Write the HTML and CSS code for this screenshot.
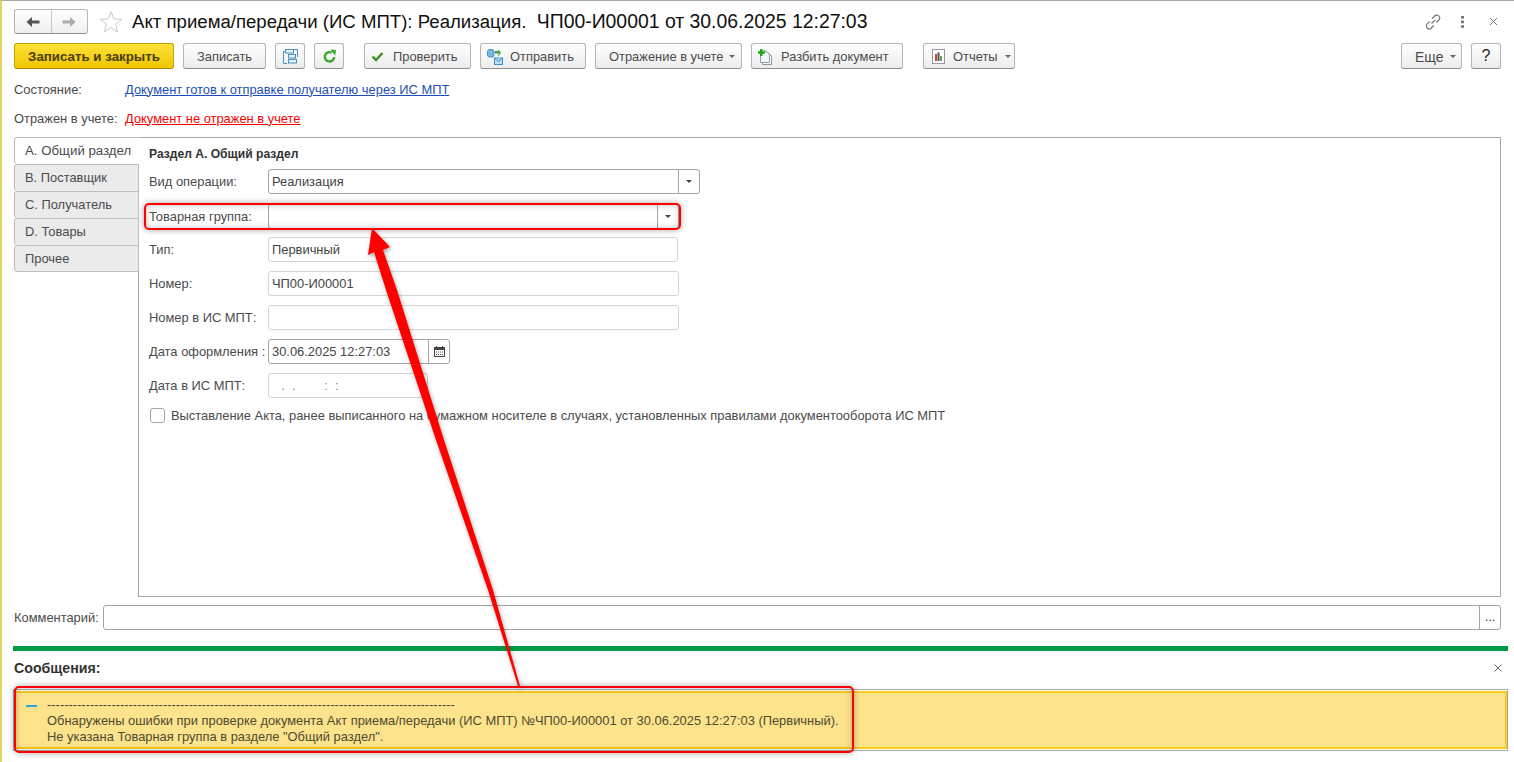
FILE: index.html
```html
<!DOCTYPE html>
<html lang="ru">
<head>
<meta charset="utf-8">
<title>Акт приема/передачи</title>
<link rel="stylesheet" href="styles.css">
</head>
<body>
<div class="page">
  <header class="titlebar">
    <div class="nav">
      <span class="nav-btn"><svg width="14" height="12" viewBox="0 0 14 12"><path d="M0.5 6 L6 1 V4.5 H13.5 V7.5 H6 V11 Z" fill="#555"/></svg></span>
      <span class="nav-btn"><svg width="14" height="12" viewBox="0 0 14 12"><path d="M13.5 6 L8 1 V4.5 H0.5 V7.5 H8 V11 Z" fill="#aaa"/></svg></span>
    </div>
    <svg class="star" width="24" height="24" viewBox="0 0 24 24"><path d="M12 1.5 L14.8 9 L22.8 9.3 L16.5 14.2 L18.7 22 L12 17.5 L5.3 22 L7.5 14.2 L1.2 9.3 L9.2 9 Z" fill="#fff" stroke="#c9c9c9"/></svg>
    <h1 class="title">Акт приема/передачи (ИС МПТ): Реализация.  <span class="title-no">ЧП00-И00001 от 30.06.2025 12:27:03</span></h1>
    <div class="win-tools">
      <svg class="wt-link" width="16" height="16" viewBox="0 0 16 16" fill="none" stroke="#777" stroke-width="1.2"><path d="M6.5 9.5 L10 6 M7 4.5 L9.5 2 a2.8 2.8 0 0 1 4.3 4 L11.3 8.5 M8.8 11.5 L6.3 14 a2.8 2.8 0 0 1 -4.1 -4.1 L4.7 7.5"/></svg>
      <svg class="wt-dots" width="3" height="12" viewBox="0 0 3 12" fill="#777"><rect x="0" y="0" width="3" height="2.6"/><rect x="0" y="4.6" width="3" height="2.6"/><rect x="0" y="9.2" width="3" height="2.6"/></svg>
      <svg class="wt-close" width="7" height="7" viewBox="0 0 7 7" stroke="#777" stroke-width="1"><path d="M0 0 L7 7 M7 0 L0 7"/></svg>
    </div>
  </header>

  <div class="toolbar">
    <button class="btn primary w-save-close">Записать и закрыть</button>
    <button class="btn w-save">Записать</button>
    <button class="btn icon"><svg width="15" height="15" viewBox="0 0 15 15" fill="none" stroke="#4a8fbd"><path d="M2 2.5 H0.5 V14.5 H4"/><path d="M11 0.5 H14.5 V8"/><rect x="2.5" y="0.5" width="8" height="3.5" fill="#eaf3f9"/><rect x="5.5" y="5.5" width="7" height="3.5" fill="#eaf3f9"/><rect x="5.5" y="10.5" width="8" height="3.5" fill="#eaf3f9"/></svg></button>
    <button class="btn icon"><svg width="15" height="15" viewBox="0 0 16 16" fill="none"><path d="M13 8.5 A5 5 0 1 1 10.5 4" stroke="#3fa535" stroke-width="2.6"/><path d="M9 0.5 L15 1 L14 7.2 Z" fill="#3fa535"/></svg></button>
    <button class="btn pad gap-l w-check"><svg width="13" height="11" viewBox="0 0 13 11" fill="none"><path d="M1.5 5.5 L5 9 L11.5 2" stroke="#3d8f22" stroke-width="2.4"/></svg>Проверить</button>
    <button class="btn pad w-send"><svg width="16" height="16" viewBox="0 0 16 16"><rect x="0.5" y="0.5" width="6.5" height="7.5" rx="2" fill="#7cb7e6" stroke="#4c8fc4"/><path d="M8 2 H11 V0.5 L14 3.5 L12 6.5 H10.5 L12 4.5 H8 Z" fill="#3fa535"/><rect x="7.5" y="9" width="8" height="6.5" fill="#bcdcf5" stroke="#3f8fd0"/><path d="M7.5 9 L11.5 12.5 L15.5 9" fill="none" stroke="#3f8fd0"/></svg>Отправить</button>
    <button class="btn pad-wide w-post">Отражение в учете<span class="caret"></span></button>
    <button class="btn pad w-split"><svg width="14" height="16" viewBox="0 0 14 16"><path d="M4.5 3.5 H10 L13.5 7 V15.5 H4.5 Z" fill="#fff" stroke="#8b9aa3"/><path d="M2.5 2 H8 L11.5 5.5 V13.5 H2.5 Z" fill="#f4f7f8" stroke="#8b9aa3"/><path d="M2 0 H4.5 V2.2 H7 V4.7 H4.5 V7 H2 V4.7 H0 V2.2 H2 Z" fill="#22a81d"/></svg>Разбить документ</button>
    <button class="btn pad-mid gap-m w-rep"><svg width="13" height="15" viewBox="0 0 13 15"><rect x="0.5" y="0.5" width="12" height="14" fill="#fff" stroke="#999"/><rect x="3" y="5" width="2" height="7" fill="#d8403a"/><rect x="5.5" y="3.5" width="2" height="8.5" fill="#555"/><rect x="8" y="7" width="2" height="5" fill="#58a94a"/></svg>Отчеты<span class="caret"></span></button>
    <span class="spacer"></span>
    <button class="btn pad-wide w-more">Еще<span class="caret"></span></button>
    <button class="btn icon help">?</button>
  </div>

  <div class="status-row status-first"><span class="status-label">Состояние:</span><a class="lnk blue">Документ готов к отправке получателю через ИС МПТ</a></div>
  <div class="status-row status-second"><span class="status-label">Отражен в учете:</span><a class="lnk red">Документ не отражен в учете</a></div>

  <section class="workspace">
    <nav class="tabs">
      <div class="tab active">А. Общий раздел</div>
      <div class="tab">В. Поставщик</div>
      <div class="tab">С. Получатель</div>
      <div class="tab">D. Товары</div>
      <div class="tab">Прочее</div>
    </nav>
    <div class="panel">
      <h2 class="panel-title">Раздел А. Общий раздел</h2>
      <div class="form">
        <div class="row r-1"><label>Вид операции:</label><div class="field dark w-432"><span class="val">Реализация</span><span class="fbtn"><span class="caret dk"></span></span></div></div>
        <div class="row r-2"><label>Товарная группа:</label><div class="field dark w-411"><span class="val"></span><span class="fbtn"><span class="caret dk"></span></span></div></div>
        <div class="row r-4"><label>Тип:</label><div class="field w-410"><span class="val">Первичный</span></div></div>
        <div class="row r-3"><label>Номер:</label><div class="field w-411"><span class="val">ЧП00-И00001</span></div></div>
        <div class="row r-3"><label>Номер в ИС МПТ:</label><div class="field w-411"><span class="val"></span></div></div>
        <div class="row r-3"><label>Дата оформления :</label><div class="field dark w-182"><span class="val">30.06.2025 12:27:03</span><span class="fbtn cal"><svg width="11" height="11" viewBox="0 0 11 11"><rect x="0.5" y="1.5" width="10" height="9" fill="#fff" stroke="#444"/><rect x="0.5" y="1.5" width="10" height="2.5" fill="#444"/><path d="M2.5 0 V2 M8.5 0 V2" stroke="#444"/><path d="M2 6 H9 M2 8.5 H9" stroke="#444" stroke-dasharray="1 1"/></svg></span></div></div>
        <div class="row r-3"><label>Дата в ИС МПТ:</label><div class="field w-160"><span class="val mask">  .  .        :  :</span></div></div>
      </div>
      <div class="check-row"><span class="checkbox"></span><span>Выставление Акта, ранее выписанного на бумажном носителе в случаях, установленных правилами документооборота ИС МПТ</span></div>
    </div>
  </section>

  <div class="comment-row"><label>Комментарий:</label><div class="field dark grow"><span class="val"></span><span class="fbtn dots">...</span></div></div>

  <div class="splitter"></div>

  <div class="msg-head"><strong>Сообщения:</strong><svg width="8" height="8" viewBox="0 0 8 8" stroke="#666" stroke-width="1"><path d="M0.5 0.5 L7.5 7.5 M7.5 0.5 L0.5 7.5"/></svg></div>
  <div class="msg-frame">
    <div class="msg">
      <span class="dash"></span>
      <div class="msg-text">
        <div>-----------------------------------------------------------------------------------------------</div>
        <div>Обнаружены ошибки при проверке документа Акт приема/передачи (ИС МПТ) №ЧП00-И00001 от 30.06.2025 12:27:03 (Первичный).</div>
        <div>Не указана Товарная группа в разделе "Общий раздел".</div>
      </div>
    </div>
  </div>

  <div class="mark mark-a"></div>
  <div class="mark mark-b"></div>
  <svg class="arrow" width="1514" height="762" viewBox="0 0 1514 762"><path d="M372 228 L390 247 L383 250 L397 290 L444 440 L493 590 L520 686 L518 686 L488 590 L436 440 L386 290 L374 252 L368 255 Z" fill="#fe0000"/></svg>
</div>
</body>
</html>
```
FILE: styles.css
```css
* { box-sizing: border-box; }
html, body { margin: 0; height: 100%; overflow: hidden; background: #fff; }
body { font-family: "Liberation Sans", Arial, sans-serif; font-size: 12.9px; color: #4b4b4b; }
.page { position: relative; width: 1514px; height: 762px; padding: 8px 13px 0 12px; border-top: 1px solid #a8a8a8; border-left: 2px solid #e2d25f; overflow: hidden; }

.titlebar { display: flex; align-items: center; height: 25px; }
.nav { display: flex; width: 74px; height: 25px; border: 1px solid #b5b5b5; border-bottom-color: #8f8f8f; border-radius: 3px; background: linear-gradient(#fff, #efefef); }
.nav-btn { flex: 1; display: flex; align-items: center; justify-content: center; }
.nav-btn + .nav-btn { border-left: 1px solid #c8c8c8; }
.star { margin-left: 11px; }
.title { margin: 0 0 0 9px; font-size: 18.62px; font-weight: 400; color: #111; white-space: pre; }
.title-no { font-size: 19.4px; }
.win-tools { margin-left: auto; display: flex; align-items: center; padding-right: 4px; }
.wt-dots { margin-left: 20px; }
.wt-close { margin-left: 26px; }

.toolbar { display: flex; align-items: stretch; height: 26px; margin-top: 9px; gap: 9px; }
.btn { display: flex; align-items: center; justify-content: center; gap: 8px; padding: 1px 0 0; font: 12.9px "Liberation Sans", Arial, sans-serif; line-height: 24px; color: #4b4b4b; background: linear-gradient(#fff, #ececec); border: 1px solid #b5b5b5; border-bottom-color: #8e8e8e; border-radius: 3px; }
.pad, .pad-mid, .pad-wide { justify-content: flex-start; }
.pad { padding-left: 6px; }
.pad-mid { padding-left: 8px; }
.pad-wide { padding-left: 13px; gap: 6px; }
.primary { width: 160px; font-weight: 700; font-size: 13.3px; color: #4a3d00; background: linear-gradient(#fde23a, #f0c500); border-color: #c6a300; border-bottom-color: #a88a00; }
.w-save { width: 83px; }
.icon { width: 30px; padding-top: 0; }
.gap-l { margin-left: 11px; }
.gap-m { margin-left: 11px; }
.w-check { width: 107px; gap: 9px; }
.w-send { width: 106px; gap: 7px; }
.w-post { width: 147px; }
.w-split { width: 152px; gap: 9px; }
.w-rep { width: 92px; }
.w-more { width: 61px; font-size: 14px; }
.help { font-size: 16px; color: #222; }
.spacer { flex: 1; }
.caret { display: inline-block; width: 0; height: 0; border-left: 3px solid transparent; border-right: 3px solid transparent; border-top: 3px solid #666; }
.w-rep .caret { margin-left: -1px; }
.caret.dk { border-top-color: #444; margin: 0; }

.status-row { display: flex; align-items: center; height: 16px; }
.status-first { margin-top: 12px; }
.status-second { margin-top: 13px; }
.status-label { width: 111px; }
.lnk { text-decoration: underline; }
.blue { color: #1c4fb5; }
.red { color: #fa0000; }

.workspace { display: flex; height: 460px; margin-top: 11px; }
.tabs { width: 125px; position: relative; z-index: 1; margin-right: -1px; }
.tab { height: 27px; padding-left: 10px; line-height: 26px; background: #ebebeb; border: 1px solid #bdbdbd; border-bottom-width: 0; border-radius: 3px 0 0 3px; }
.tab:last-child { border-bottom-width: 1px; }
.tab.active { background: #fff; border-right-color: #fff; font-size: 13.25px; }
.panel { flex: 1; border: 1px solid #a8a8a8; padding: 9px 10px; }
.panel-title { margin: 0; font-size: 12.1px; line-height: 14px; font-weight: 700; color: #333; }
.form { display: flex; flex-direction: column; margin-top: 8px; }
.row { display: flex; align-items: center; height: 25px; }
.row label { width: 119px; flex: none; }
.r-2 { margin-top: 10px; }
.r-3 { margin-top: 9px; }
.r-4 { margin-top: 8px; }
.field { display: flex; height: 25px; border: 1px solid #d4d4d4; border-radius: 3px; background: #fff; }
.field.dark { border-color: #a4a4a4; }
.val { flex: 1; padding-left: 3px; line-height: 24px; color: #444; white-space: pre; }
.mask { color: #888; padding-left: 5px; }
.fbtn { flex: none; width: 21px; border-left: 1px solid #a4a4a4; display: flex; align-items: center; justify-content: center; }
.w-432 { width: 432px; }
.w-411 { width: 411px; }
.w-410 { width: 410px; }
.w-182 { width: 182px; }
.w-160 { width: 160px; }
.check-row { display: flex; align-items: center; height: 16px; margin-top: 9px; gap: 6px; padding-left: 1px; }
.checkbox { width: 15px; height: 15px; border: 1px solid #a4a4a4; border-radius: 3px; background: #fff; }

.comment-row { display: flex; align-items: center; height: 25px; margin-top: 8px; }
.comment-row label { width: 89px; flex: none; }
.grow { flex: 1; }
.dots { color: #333; align-items: flex-start; line-height: 22px; }

.splitter { height: 5px; margin-top: 16px; margin-right: -7px; margin-left: -1px; background: #019a47; }
.msg-head { display: flex; align-items: center; justify-content: space-between; height: 16px; margin-top: 9px; margin-right: -1px; font-size: 14.2px; color: #333; }
.msg-frame { height: 62px; margin-top: 13px; margin-right: -7px; margin-left: -1px; border: 1px solid #a8a8a8; padding-top: 1px; }
.msg { display: flex; height: 58px; background: #fde38c; border: 2px solid #f8c91f; }
.dash { flex: none; width: 11px; height: 2px; margin: 12px 0 0 10px; background: #22a5e0; }
.msg-text { margin-left: 10px; padding-top: 4px; line-height: 16px; color: #4d4a30; white-space: nowrap; }

.mark { position: absolute; border: 2px solid #fe0000; border-radius: 5px; box-shadow: 0 0 6px rgba(0,0,0,.35), inset 0 0 6px rgba(0,0,0,.25); pointer-events: none; }
.mark-a { left: 142px; top: 202px; width: 537px; height: 27px; }
.mark-b { left: 12px; top: 685px; width: 840px; height: 67px; }
.arrow { position: absolute; left: -2px; top: -1px; filter: drop-shadow(1px 2px 2px rgba(0,0,0,.35)); pointer-events: none; }
```
